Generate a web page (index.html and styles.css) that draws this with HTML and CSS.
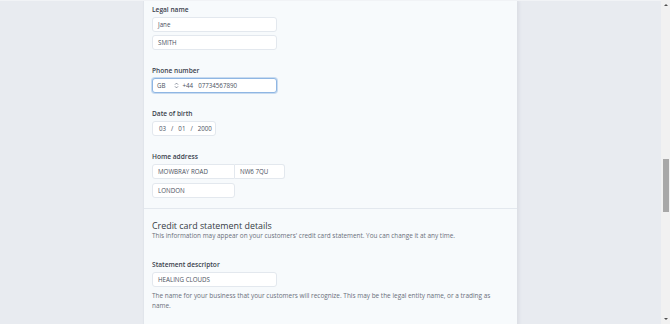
FILE: index.html
```html
<!DOCTYPE html>
<html>
<head>
<meta charset="utf-8">
<link rel="stylesheet" href="styles.css">
</head>
<body>
<div class="viewport">
  <main class="panel">
    <section class="section">
      <div class="field first">
        <div class="label">Legal name</div>
        <div class="stack">
          <div class="input w124">Jane</div>
          <div class="input w124">SMITH</div>
        </div>
      </div>
      <div class="field">
        <div class="label">Phone number</div>
        <div class="input w124 focus phone">
          <span class="cc">GB</span>
          <svg class="spin" width="5" height="7" viewBox="0 0 5 7"><path d="M1 2.6 L2.5 1.1 L4 2.6 M1 4.4 L2.5 5.9 L4 4.4" fill="none" stroke="#6b7385" stroke-width="0.8"/></svg>
          <span class="prefix">+44</span>
          <span class="num">07734567890</span>
        </div>
      </div>
      <div class="field">
        <div class="label">Date of birth</div>
        <div class="input date">
          <span>03</span><span class="sep">/</span><span>01</span><span class="sep">/</span><span>2000</span>
        </div>
      </div>
      <div class="field">
        <div class="label">Home address</div>
        <div class="stack gap4">
          <div class="row">
            <div class="input w83 joinl">MOWBRAY ROAD</div>
            <div class="input w50 joinr">NW6 7QU</div>
          </div>
          <div class="input w83">LONDON</div>
        </div>
      </div>
    </section>
    <section class="section second">
      <h2 class="heading">Credit card statement details</h2>
      <p class="desc">This information may appear on your customers' credit card statement. You can change it at any time.</p>
      <div class="field">
        <div class="label">Statement descriptor</div>
        <div class="input w124">HEALING CLOUDS</div>
        <p class="help">The name for your business that your customers will recognize. This may be the legal entity name, or a trading as name.</p>
      </div>
    </section>
  </main>
</div>
<div class="scrollbar">
  <div class="arrow up"></div>
  <div class="track"><div class="thumb"></div></div>
  <div class="arrow down"></div>
</div>
</body>
</html>
```

FILE: styles.css
```css
* { box-sizing: border-box; }
html, body { margin: 0; padding: 0; }
body {
  width: 670px;
  height: 324px;
  overflow: hidden;
  display: flex;
  background: #e8ebf0;
  font-family: "Segoe UI", "Open Sans", "Noto Sans", Arial, sans-serif;
  color: #3c4257;
}
.viewport {
  flex: 1;
  display: flex;
  padding-left: 143px;
  border-top: 1px solid #f1f3f6;
  overflow: hidden;
}
.panel {
  width: 374px;
  background: #f7fafc;
  border-left: 1px solid #e1e5eb;
  box-shadow: 2px 0 3px rgba(60, 66, 87, 0.08);
  height: 400px;
}
.section {
  padding: 4px 0 10px 8px;
}
.section.second {
  border-top: 1px solid #e3e8ee;
  padding-top: 11px;
}
.field { margin-top: 16px; }
.field.first { margin-top: 0; }
.label {
  font-size: 6.6px;
  line-height: 9px;
  font-weight: 600;
  color: #3a3f4d;
  margin-bottom: 3px;
}
.stack { display: flex; flex-direction: column; gap: 3px; align-items: flex-start; }
.stack.gap4 { gap: 4px; }
.row { display: flex; }
.input {
  height: 15px;
  background: #fff;
  border: 1px solid #e3e8ee;
  border-radius: 3px;
  font-size: 6.2px;
  line-height: 13px;
  padding-left: 5px;
  color: #4a505e;
  display: flex;
  align-items: center;
  white-space: nowrap;
}
.w124 { width: 125px; }
.w83 { width: 83px; }
.w50 { width: 50px; }
.joinl { border-top-right-radius: 0; border-bottom-right-radius: 0; }
.joinr { border-top-left-radius: 0; border-bottom-left-radius: 0; border-left: none; padding-left: 5px; }
.focus {
  border-color: #8fb6e3;
  box-shadow: 0 0 0 1px rgba(143, 182, 227, 0.45);
}
.phone { padding-left: 4px; }
.phone .cc { margin-right: 8px; }
.phone .spin { margin-right: 4px; }
.phone .prefix { margin-right: 5px; }
.date {
  width: 64px;
  padding-left: 6px;
}
.date .sep { margin: 0 5px; }
.heading {
  margin: 0;
  font-size: 8.9px;
  line-height: 11px;
  font-weight: 500;
  color: #363a44;
}
.desc {
  margin: 0;
  font-size: 6.4px;
  line-height: 10px;
  color: #6a6f7b;
}
.second .field { margin-top: 19px; }
.help {
  margin: 4px 0 0;
  width: 355px;
  font-size: 6.45px;
  line-height: 10px;
  color: #6a6f7b;
}
.scrollbar {
  width: 9px;
  background: #f1f1f1;
  display: flex;
  flex-direction: column;
  align-items: center;
}
.arrow {
  width: 0; height: 0;
  border-left: 2px solid transparent;
  border-right: 2px solid transparent;
  margin: 4px 0;
}
.arrow.up { border-bottom: 2px solid #505050; }
.arrow.down { border-top: 2px solid #505050; }
.track { flex: 1; width: 100%; padding-top: 149px; display: flex; justify-content: center; }
.thumb {
  width: 6px;
  height: 53px;
  background: #a8a8a8;
}
```
